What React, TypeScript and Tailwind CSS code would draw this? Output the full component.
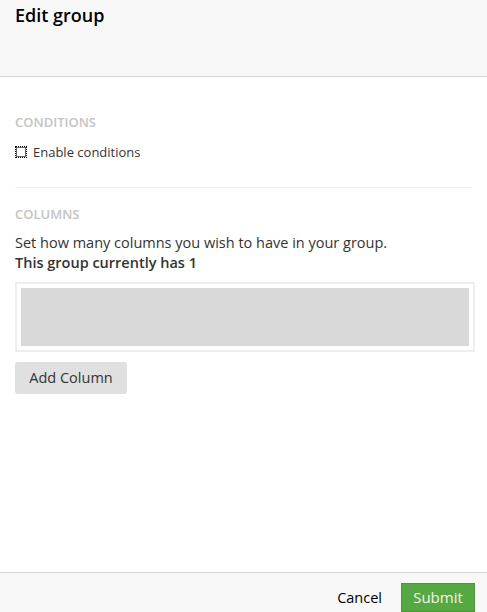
export default function App() {
  return (
    <div className="h-[612px] w-[487px] flex flex-col bg-white font-['Open_Sans',sans-serif] text-[#333] overflow-hidden">
      <header className="h-[77px] shrink-0 bg-[#f8f8f8] border-b border-[#d6d6d6] px-[15px] pt-[2px]">
        <h1 className="text-[18px] font-semibold text-black leading-[26px]">Edit group</h1>
      </header>

      <main className="flex-1 px-[15px] pt-[36px]">
        <div className="text-[13px] font-semibold uppercase text-[#c4c4c4] leading-[18px]">Conditions</div>
        <label className="mt-[12px] flex items-center gap-[6px] text-[13px] leading-[18px] text-[#333]">
          <span className="w-[12px] h-[12px] border border-dotted border-black bg-white outline outline-1 outline-[#666] -outline-offset-2" />
          Enable conditions
        </label>

        <div className="mt-[26px] border-t border-[#f0f0f0]" />

        <div className="mt-[17px] text-[13px] font-semibold uppercase text-[#c4c4c4] leading-[18px]">Columns</div>
        <p className="mt-[10px] text-[14.5px] leading-[20px] text-[#333]">
          Set how many columns you wish to have in your group.
          <br />
          <span className="font-semibold">This group currently has 1</span>
        </p>

        <div className="mt-[9px] w-[460px] border-2 border-[#eee] p-[4px]">
          <div className="h-[58px] bg-[#d9d9d9]" />
        </div>

        <button className="mt-[10px] h-[32px] w-[112px] rounded-[3px] bg-[#e0e0e0] text-[14.5px] font-medium text-[#333]">
          Add Column
        </button>
      </main>

      <footer className="h-[40px] shrink-0 bg-[#f8f8f8] border-t border-[#d6d6d6] flex items-end justify-end pr-[12px] gap-[19px]">
        <button className="mb-[3px] text-[14.5px] text-black">Cancel</button>
        <button className="h-[29px] w-[74px] bg-[#56a843] text-[15px] text-[#f4f4e8] border border-[#4a9a39]">Submit</button>
      </footer>
    </div>
  );
}
